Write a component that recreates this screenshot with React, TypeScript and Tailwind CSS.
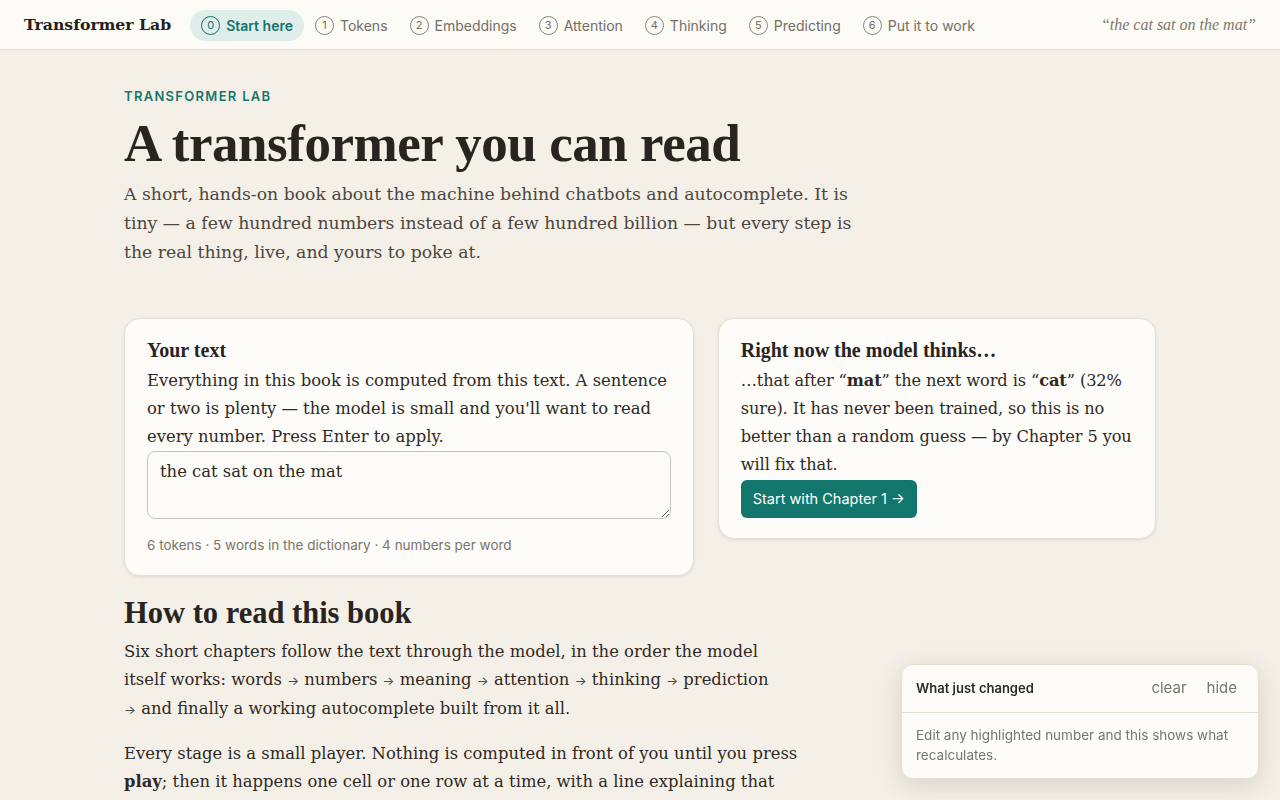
import React from "react";

const serif = { fontFamily: '"Liberation Serif", "DejaVu Serif", serif' };
const body = { fontFamily: '"DejaVu Serif", "Liberation Serif", serif' };
const sans = { fontFamily: 'Inter, "Liberation Sans", sans-serif' };

const chapters = [
  { n: 0, label: "Start here", active: true },
  { n: 1, label: "Tokens" },
  { n: 2, label: "Embeddings" },
  { n: 3, label: "Attention" },
  { n: 4, label: "Thinking" },
  { n: 5, label: "Predicting" },
  { n: 6, label: "Put it to work" },
];

function Arrow() {
  return (
    <span className="text-[12.5px] text-[#4a443d]" style={sans}>
      →
    </span>
  );
}

function Nav() {
  return (
    <header className="h-[50px] flex items-center pt-px px-6 bg-[#fcfbf6] border-b border-[#e6e0d4]" style={sans}>
      <div className="text-[15.7px] font-bold text-[#24201c] mr-[19px]" style={body}>
        Transformer Lab
      </div>
      <nav className="flex items-center">
        {chapters.map((c) => (
          <div
            key={c.n}
            className={
              c.active
                ? "flex items-center gap-[6px] h-[31px] px-[11px] rounded-full bg-[#dfeeea] text-[#14736a] font-semibold text-[14px]"
                : "flex items-center gap-[6px] h-[31px] px-[11px] rounded-full text-[#736e67] text-[14px]"
            }
          >
            <span
              className={
                c.active
                  ? "w-[19px] h-[19px] rounded-full border border-[#14736a] flex items-center justify-center text-[11px] font-normal"
                  : "w-[19px] h-[19px] rounded-full border border-[#8a857e] flex items-center justify-center text-[11px]"
              }
            >
              {c.n}
            </span>
            {c.label}
          </div>
        ))}
      </nav>
      <div className="ml-auto italic text-[16px] text-[#7d776f]" style={serif}>
        “the cat sat on the mat”
      </div>
    </header>
  );
}

export default function App() {
  return (
    <div className="min-h-[800px] bg-[#f5f0e7] text-[#2a2520]">
      <Nav />
      <main className="max-w-[1032px] mx-auto pt-[38px] pb-10">
        <div className="text-[13px] font-semibold tracking-[0.1em] text-[#17766c] uppercase leading-[16px]" style={sans}>
          Transformer Lab
        </div>
        <h1 className="mt-[8px] text-[53px] leading-[62px] font-bold text-[#29241f] tracking-[-0.45px]" style={serif}>
          A transformer you can read
        </h1>
        <p className="mt-[6px] max-w-[745px] text-[17.25px] leading-[29px] text-[#4c463f]" style={body}>
          A short, hands-on book about the machine behind chatbots and autocomplete. It is tiny — a few hundred
          numbers instead of a few hundred billion — but every step is the real thing, live, and yours to poke at.
        </p>

        <div className="mt-[51px] grid grid-cols-[1.3fr_1fr] gap-6 items-start">
          <section className="bg-[#fdfcf8] rounded-2xl border border-[#e6e0d4] shadow-[0_1px_3px_rgba(60,50,30,0.12)] px-[22px] pt-[19px] pb-[20px]">
            <h2 className="text-[20px] leading-[24px] font-bold text-[#29241f]" style={serif}>Your text</h2>
            <p className="mt-[5px] text-[16.4px] leading-[28px] text-[#2e2924]" style={body}>
              Everything in this book is computed from this text. A sentence or two is plenty — the model is small and
              you'll want to read every number. Press Enter to apply.
            </p>
            <textarea
              defaultValue="the cat sat on the mat"
              className="block w-full h-[68px] rounded-lg border border-[#c9c3b9] bg-[#fdfcf8] px-3 py-[8px] text-[16.4px] leading-[24px] text-[#2e2924] outline-none resize-y"
              style={body}
            />
            <div className="mt-[16px] text-[13.5px] leading-[20px] text-[#7a746c]" style={sans}>
              6 tokens · 5 words in the dictionary · 4 numbers per word
            </div>
          </section>

          <section className="bg-[#fdfcf8] rounded-2xl border border-[#e6e0d4] shadow-[0_1px_3px_rgba(60,50,30,0.12)] pl-[22px] pr-[16px] pt-[19px] pb-[20px]">
            <h2 className="text-[20px] leading-[24px] font-bold text-[#29241f]" style={serif}>Right now the model thinks…</h2>
            <p className="mt-[5px] text-[16.2px] leading-[28px] tracking-[-0.1px] text-[#2e2924]" style={body}>
              …that after “<b>mat</b>” the next word is “<b>cat</b>” (32% sure). It has never been trained, so this is
              no better than a random guess — by Chapter 5 you will fix that.
            </p>
            <button
              className="mt-[1px] h-[38px] px-3 rounded-md bg-[#13766c] text-white text-[14.5px]"
              style={sans}
            >
              Start with Chapter 1 →
            </button>
          </section>
        </div>

        <h2 className="mt-[19px] text-[30.5px] leading-[36px] font-bold text-[#29241f]" style={serif}>
          How to read this book
        </h2>
        <p className="mt-[7px] max-w-[675px] text-[16.4px] leading-[28px] text-[#2e2924]" style={body}>
          Six short chapters follow the text through the model, in the order the model itself works: words <Arrow />{" "}
          numbers <Arrow /> meaning <Arrow /> attention <Arrow /> thinking <Arrow /> prediction <Arrow />
          {"\u00a0"}and finally a working autocomplete built from it all.
        </p>
        <p className="mt-[16px] max-w-[675px] text-[16.4px] leading-[28px] text-[#2e2924]" style={body}>
          Every stage is a small player. Nothing is computed in front of you until you press <b>play</b>; then it
          happens one cell or one row at a time, with a line explaining that step, so you can follow every number as
          it is made.
        </p>
      </main>

      <div
        className="fixed right-[21px] bottom-[21px] w-[358px] bg-[#fdfcf8] rounded-xl border border-[#e6e0d4] shadow-[0_6px_24px_rgba(60,50,30,0.16)]"
        style={sans}
      >
        <div className="flex items-center h-[48px] px-[14px] border-b border-[#e3ddd2]">
          <div className="text-[13px] font-semibold text-[#2e2924]">What just changed</div>
          <div className="ml-auto flex gap-[20px] text-[15px] text-[#7a746c] pr-[7px]">
            <span>clear</span>
            <span>hide</span>
          </div>
        </div>
        <div className="px-[14px] pt-[12px] pb-[13px] text-[13.5px] leading-[20px] text-[#7a746c]">
          Edit any highlighted number and this shows what recalculates.
        </div>
      </div>
    </div>
  );
}
